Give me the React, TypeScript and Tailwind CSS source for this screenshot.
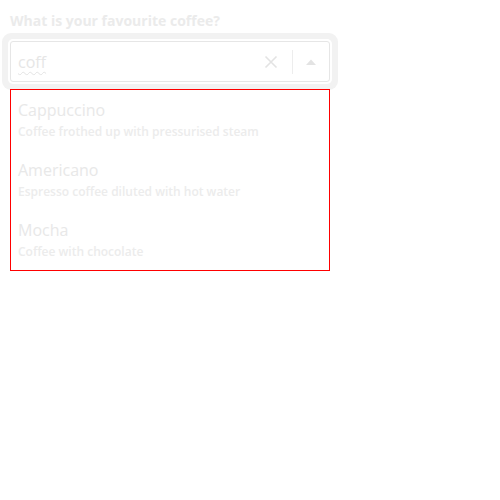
import React from 'react';

const options = [
  { title: 'Cappuccino', description: 'Coffee frothed up with pressurised steam' },
  { title: 'Americano', description: 'Espresso coffee diluted with hot water' },
  { title: 'Mocha', description: 'Coffee with chocolate' },
];

export default function App() {
  return (
    <div className="min-h-[500px] w-[500px] bg-white font-['Open_Sans',sans-serif]">
      <div className="pl-[10px] pt-[11px] w-[330px]">
        {/* Label */}
        <label className="block text-[14px] leading-[20px] font-bold text-[#ebebeb]">
          What is your favourite coffee?
        </label>

        {/* Combobox */}
        <div className="relative mt-[10px]">
          <div className="flex items-center h-[41px] border border-[#e6e6e6] rounded-[3px] bg-white shadow-[0_0_0_2px_#ffffff,0_0_0_8px_#f2f2f2]">
            <div className="flex-1 pl-[7px]">
              <span className="text-[16px] leading-[22px] text-[#e6e6e6] underline decoration-wavy decoration-[#e3e3e3] decoration-1 underline-offset-[3px]">
                coff
              </span>
            </div>
            <button className="w-[28px] h-full flex items-center justify-center text-[#e3e3e3] ml-[2px]">
              <svg width="14" height="14" viewBox="0 0 14 14" fill="none" stroke="currentColor" strokeWidth="1.6">
                <path d="M1.5 1.5l11 11M12.5 1.5l-11 11" />
              </svg>
            </button>
            <div className="w-px h-[24px] bg-[#ededed] ml-[7px]" />
            <button className="w-[36px] h-full flex items-center justify-center">
              <svg width="10" height="6" viewBox="0 0 10 6">
                <path d="M0 6L5 0.5L10 6Z" fill="#e3e3e3" />
              </svg>
            </button>
          </div>

          {/* Listbox */}
          <ul className="absolute left-0 right-0 top-[48px] border border-[#ff0000] bg-white">
            {options.map((o) => (
              <li key={o.title} className="px-[7px] pt-[8px] pb-[10px]">
                <div className="text-[16px] leading-[24px] text-[#e8e8e8]">{o.title}</div>
                <div className="mt-[2px] text-[12px] leading-[16px] font-semibold text-[#ececec]">
                  {o.description}
                </div>
              </li>
            ))}
          </ul>
        </div>
      </div>
    </div>
  );
}
